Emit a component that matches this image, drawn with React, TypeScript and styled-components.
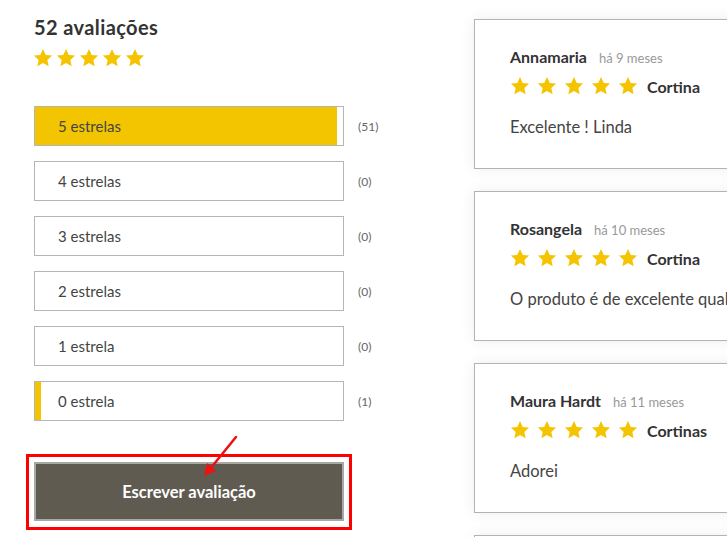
import React from 'react'
import styled, { createGlobalStyle } from 'styled-components'

const GlobalStyle = createGlobalStyle`
  html, body {
    margin: 0;
    padding: 0;
    background: #ffffff;
    overflow: hidden;
  }
  body {
    font-family: Lato, "Open Sans", Arial, sans-serif;
    color: #333333;
  }
`

const Page = styled.div`
  display: flex;
  align-items: flex-start;
  width: 727px;
  height: 537px;
  overflow: hidden;
  padding-left: 34px;
  box-sizing: border-box;
`

const Summary = styled.section`
  width: 350px;
  flex-shrink: 0;
  padding-top: 15px;
`

const Title = styled.h2`
  margin: 0;
  font-size: 20px;
  line-height: 24px;
  font-weight: 700;
  letter-spacing: 0.4px;
  color: #333333;
`

const StarRow = styled.div<{ $gap: number }>`
  display: flex;
  align-items: center;
  gap: ${(p) => p.$gap}px;
`

const HeaderStars = styled(StarRow)`
  margin-top: 9px;
  margin-left: -1px;
`

const Bars = styled.div`
  display: flex;
  flex-direction: column;
  gap: 15px;
  margin-top: 38px;
`

const BarRow = styled.div`
  display: flex;
  align-items: center;
`

const BarBox = styled.div`
  position: relative;
  width: 310px;
  height: 40px;
  box-sizing: border-box;
  border: 1px solid #b5b5b5;
  background: #ffffff;
`

const BarFill = styled.div`
  position: absolute;
  left: 0;
  top: 0;
  bottom: 0;
  background: #f2c500;
`

const BarLabel = styled.span`
  position: relative;
  display: flex;
  align-items: center;
  height: 100%;
  padding-left: 23px;
  font-size: 15px;
  color: #444444;
`

const BarCount = styled.span`
  margin-left: 14px;
  font-size: 12px;
  color: #666666;
`

const ButtonArea = styled.div`
  position: relative;
  width: 310px;
  margin-top: 41px;
`

const WriteButton = styled.button`
  display: block;
  width: 310px;
  height: 59px;
  box-sizing: border-box;
  border: 2px solid #a9a8a3;
  background: #5f5b50;
  color: #ffffff;
  font-family: Lato, "Open Sans", Arial, sans-serif;
  font-size: 16.5px;
  font-weight: 700;
  cursor: pointer;
`

const Highlight = styled.div`
  position: absolute;
  left: -8px;
  top: -8px;
  right: -8px;
  bottom: -9px;
  border: 3px solid #ff0000;
  pointer-events: none;
`

const Arrow = styled.svg`
  position: absolute;
  left: 164px;
  top: -27px;
  pointer-events: none;
`

const Reviews = styled.section`
  display: flex;
  flex-direction: column;
  gap: 22px;
  margin-left: 90px;
  padding-top: 19px;
`

const Card = styled.article`
  width: 320px;
  height: 150px;
  box-sizing: border-box;
  border: 1px solid #b3b3b3;
  background: #ffffff;
  box-shadow: 0 0 14px rgba(0, 0, 0, 0.07);
  padding: 27px 0 0 35px;
  flex-shrink: 0;
  overflow: hidden;
`

const NameLine = styled.div`
  display: flex;
  align-items: baseline;
  gap: 12px;
  line-height: 20px;
  white-space: nowrap;
`

const Author = styled.span`
  font-size: 16px;
  font-weight: 700;
  color: #333333;
`

const When = styled.span`
  font-size: 13px;
  color: #999999;
`

const RatingLine = styled.div`
  display: flex;
  align-items: center;
  gap: 9px;
  margin-top: 8px;
`

const Product = styled.span`
  font-size: 16px;
  font-weight: 700;
  color: #333333;
  white-space: nowrap;
`

const Comment = styled.p`
  margin: 21px 0 0;
  font-size: 16.5px;
  line-height: 20px;
  color: #444444;
  white-space: nowrap;
`

const Star = ({ size }: { size: number }) => (
  <svg width={size} height={size} viewBox="0 0 24 24">
    <path
      d="M12 1.2l3.3 7.1 7.6.8-5.7 5.2 1.6 7.6L12 18l-6.8 3.9 1.6-7.6L1.1 9.1l7.6-.8z"
      fill="#f5c400"
    />
  </svg>
)

const Stars = ({ size, gap }: { size: number; gap: number }) => (
  <StarRow $gap={gap}>
    {[0, 1, 2, 3, 4].map((i) => (
      <Star key={i} size={size} />
    ))}
  </StarRow>
)

const HeaderStarsRow = () => (
  <HeaderStars $gap={3}>
    {[0, 1, 2, 3, 4].map((i) => (
      <Star key={i} size={20} />
    ))}
  </HeaderStars>
)

const bars = [
  { label: '5 estrelas', count: 51 },
  { label: '4 estrelas', count: 0 },
  { label: '3 estrelas', count: 0 },
  { label: '2 estrelas', count: 0 },
  { label: '1 estrela', count: 0 },
  { label: '0 estrela', count: 1 },
]

const reviews = [
  { name: 'Annamaria', when: 'há 9 meses', product: 'Cortina', text: 'Excelente ! Linda' },
  {
    name: 'Rosangela',
    when: 'há 10 meses',
    product: 'Cortina',
    text: 'O produto é de excelente qualidade',
  },
  { name: 'Maura Hardt', when: 'há 11 meses', product: 'Cortinas', text: 'Adorei' },
  { name: '', when: '', product: '', text: '' },
]

const total = 52

export default function App() {
  return (
    <Page>
      <GlobalStyle />
      <Summary>
        <Title>52 avaliações</Title>
        <HeaderStarsRow />
        <Bars>
          {bars.map((b) => (
            <BarRow key={b.label}>
              <BarBox>
                <BarFill style={{ width: `${(b.count / total) * 100}%` }} />
                <BarLabel>{b.label}</BarLabel>
              </BarBox>
              <BarCount>({b.count})</BarCount>
            </BarRow>
          ))}
        </Bars>
        <ButtonArea>
          <WriteButton>Escrever avaliação</WriteButton>
          <Highlight />
          <Arrow width="50" height="50" viewBox="0 0 50 50">
            <line x1="38" y1="2" x2="12" y2="34" stroke="#ee1111" strokeWidth="2.5" strokeLinecap="round" />
            <path d="M6 41 L9 28 L18 36 Z" fill="#ee1111" />
          </Arrow>
        </ButtonArea>
      </Summary>
      <Reviews>
        {reviews.map((r, i) => (
          <Card key={i}>
            {r.name && (
              <>
                <NameLine>
                  <Author>{r.name}</Author>
                  <When>{r.when}</When>
                </NameLine>
                <RatingLine>
                  <Stars size={20} gap={7} />
                  <Product>{r.product}</Product>
                </RatingLine>
                <Comment>{r.text}</Comment>
              </>
            )}
          </Card>
        ))}
      </Reviews>
    </Page>
  )
}
